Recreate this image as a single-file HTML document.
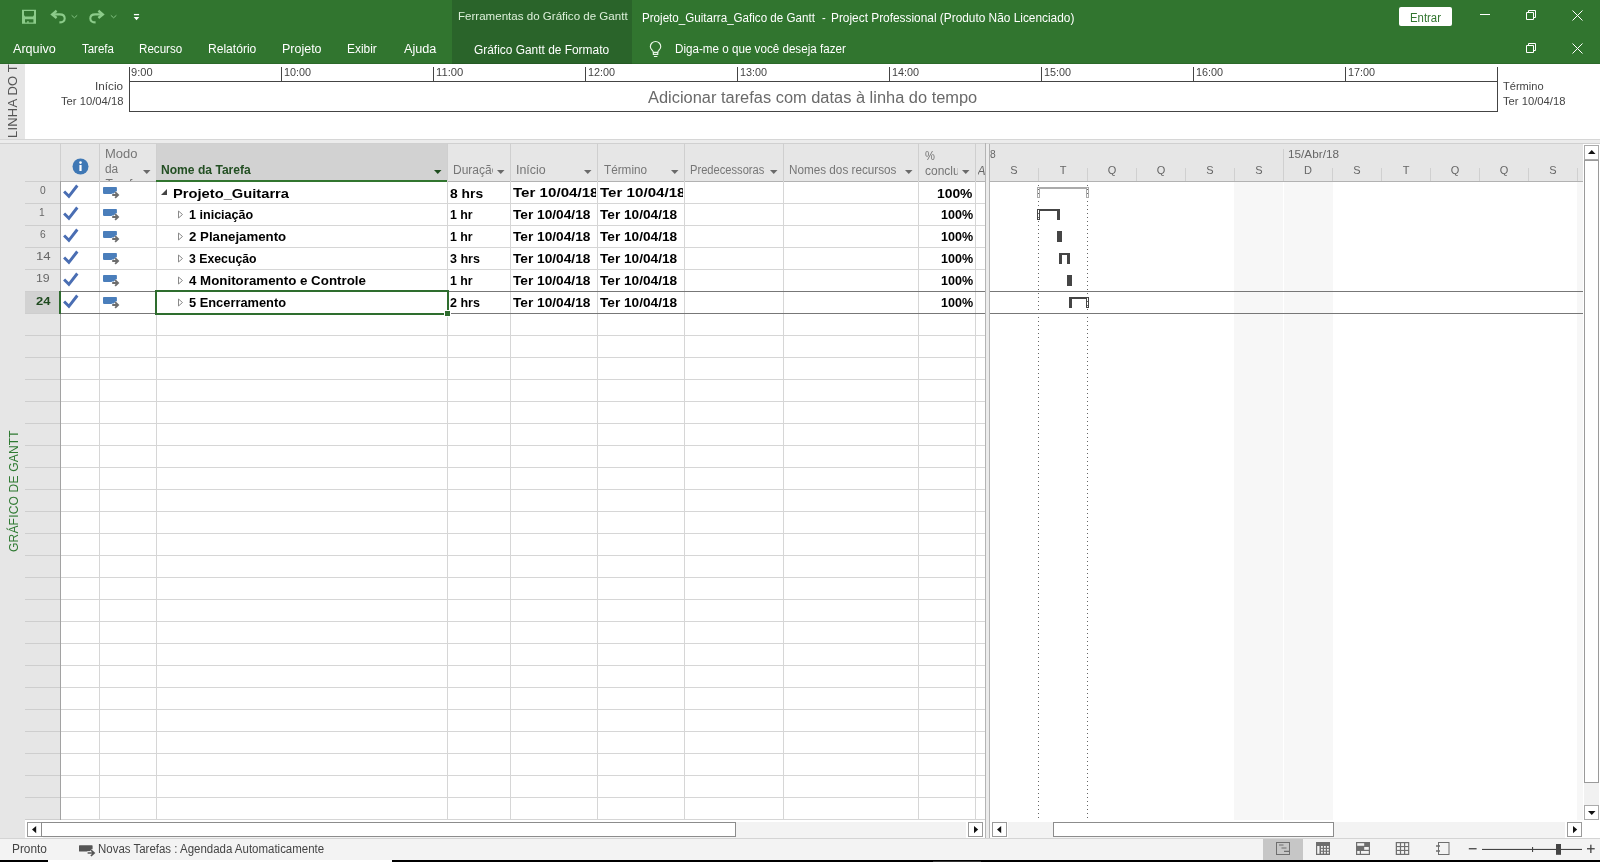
<!DOCTYPE html>
<html lang="pt-BR">
<head>
<meta charset="utf-8">
<title>Projeto_Guitarra_Gafico de Gantt - Project Professional</title>
<style>
*{box-sizing:border-box;margin:0;padding:0}
html,body{width:1600px;height:862px;overflow:hidden;background:#fff}
body{font-family:"Liberation Sans",sans-serif;font-size:12px;color:#444;position:relative}
.abs,.t{position:absolute}
.t{white-space:nowrap;line-height:1;transform-origin:0 50%}
#hdr,#tl,#main,#hs,#st{will-change:transform}
/* header */
#hdr{position:absolute;left:0;top:0;width:1600px;height:64px;background:#31752f}
#ctx{position:absolute;left:452px;top:0;width:180px;height:64px;background:#2a642a}
#hdr .t{color:#fff;font-size:12px}
/* timeline */
#tl{position:absolute;left:0;top:64px;width:1600px;height:75px;background:#fff}
#tlstrip{position:absolute;left:0;top:0;width:25px;height:75px;background:#e6e6e6;overflow:hidden}
#sep{position:absolute;left:0;top:139px;width:1600px;height:4px;background:#ececec;border-top:1px solid #d6d6d6}
.tlh{font-size:12px;color:#444}
/* main */
#main{position:absolute;left:0;top:143px;width:1600px;height:677px;background:#fff}
#strip{position:absolute;left:0;top:0;width:25px;height:695px;background:#e6e6e6}
.hl{left:60px;width:925px;height:1px;background:#d6d6d6}
.vl{top:38px;width:1px;height:639px;background:#d6d6d6}
.ht{color:#767676;font-size:12px}
.gt{color:#666;font-size:11px}
.b0{font-weight:bold;font-size:13.5px;color:#000}
.b1{font-weight:bold;font-size:12px;color:#000}
.dot{width:1px;background:repeating-linear-gradient(to bottom,transparent 0,transparent 3px,#666 3px,#666 4px)}
/* status */
#hs{position:absolute;left:25px;top:820px;width:1575px;height:18px;background:#fff}
#st .t{color:#444}
#st{position:absolute;left:0;top:838px;width:1600px;height:22px;background:#f3f3f3;border-top:1px solid #d4d4d4}
#blk1{position:absolute;left:0;top:860px;width:48px;height:2px;background:#000}
#blk2{position:absolute;left:392px;top:860px;width:1208px;height:2px;background:#000}
#tab1{left:13.0px!important;right:auto!important;top:43.0px!important;font-size:12px!important;transform:scaleX(1.0506)}
#tab2{left:82.0px!important;right:auto!important;top:43.0px!important;font-size:12px!important;transform:scaleX(0.9553)}
#tab3{left:139.0px!important;right:auto!important;top:43.0px!important;font-size:12px!important;transform:scaleX(0.9676)}
#tab4{left:208.0px!important;right:auto!important;top:43.0px!important;font-size:12px!important;transform:scaleX(1.0059)}
#tab5{left:282.0px!important;right:auto!important;top:43.0px!important;font-size:12px!important;transform:scaleX(1.0407)}
#tab6{left:347.0px!important;right:auto!important;top:43.0px!important;font-size:12px!important;transform:scaleX(0.9926)}
#tab7{left:404.0px!important;right:auto!important;top:43.0px!important;font-size:12px!important;transform:scaleX(1.0551)}
#tab8{left:474.0px!important;right:auto!important;top:44.0px!important;font-size:12px!important;transform:scaleX(0.9927)}
#h_ctx{left:458.0px!important;right:auto!important;top:11.0px!important;font-size:11px!important;transform:scaleX(1.0508)}
#h_title{left:642.0px!important;right:auto!important;top:12.0px!important;font-size:12px!important;transform:scaleX(0.967)}
#h_dash{left:822.0px!important;right:auto!important;top:12.0px!important;font-size:12px!important;transform:scaleX(0.93)}
#h_title2{left:831.0px!important;right:auto!important;top:12.0px!important;font-size:12px!important;transform:scaleX(0.9888)}
#h_tell{left:675.0px!important;right:auto!important;top:43.0px!important;font-size:12px!important;transform:scaleX(0.9702)}
#h_entrar{left:1410.0px!important;right:auto!important;top:12.0px!important;font-size:12px!important;transform:scaleX(0.9464)}
#tlh0{left:131.0px!important;right:auto!important;top:3.0px!important;font-size:11px!important;transform:scaleX(1.0064)}
#tlh1{left:284.0px!important;right:auto!important;top:3.0px!important;font-size:11px!important;transform:scaleX(0.9846)}
#tlh2{left:436.0px!important;right:auto!important;top:3.0px!important;font-size:11px!important;transform:scaleX(1.021)}
#tlh3{left:588.0px!important;right:auto!important;top:3.0px!important;font-size:11px!important;transform:scaleX(0.9846)}
#tlh4{left:740.0px!important;right:auto!important;top:3.0px!important;font-size:11px!important;transform:scaleX(0.9846)}
#tlh5{left:892.0px!important;right:auto!important;top:3.0px!important;font-size:11px!important;transform:scaleX(0.9846)}
#tlh6{left:1044.0px!important;right:auto!important;top:3.0px!important;font-size:11px!important;transform:scaleX(0.9846)}
#tlh7{left:1196.0px!important;right:auto!important;top:3.0px!important;font-size:11px!important;transform:scaleX(0.9846)}
#tlh8{left:1348.0px!important;right:auto!important;top:3.0px!important;font-size:11px!important;transform:scaleX(0.9846)}
#tl_i1{left:95.0px!important;right:auto!important;top:17.0px!important;font-size:11px!important;transform:scaleX(1.0655)}
#tl_i2{left:61.0px!important;right:auto!important;top:32.0px!important;font-size:11px!important;transform:scaleX(1.0207)}
#tl_t1{left:1503.0px!important;right:auto!important;top:17.0px!important;font-size:11px!important;transform:scaleX(1.0071)}
#tl_t2{left:1503.0px!important;right:auto!important;top:32.0px!important;font-size:11px!important;transform:scaleX(1.0207)}
#tl_c{left:648.0px!important;right:auto!important;top:25.0px!important;font-size:17.3px!important;transform:scaleX(0.9494)}
#hm1{left:105.0px!important;right:auto!important;top:5.0px!important;font-size:12px!important;transform:scaleX(1.0817)}
#hm2{left:105.0px!important;right:auto!important;top:20.0px!important;font-size:12px!important;transform:scaleX(0.9904)}
#hn{left:161.0px!important;right:auto!important;top:21.0px!important;font-size:12px!important;transform:scaleX(1.0073)}
#hi{left:516.0px!important;right:auto!important;top:21.0px!important;font-size:12px!important;transform:scaleX(1.0366)}
#hte{left:604.0px!important;right:auto!important;top:21.0px!important;font-size:12px!important;transform:scaleX(0.9785)}
#hp{left:690.0px!important;right:auto!important;top:21.0px!important;font-size:12px!important;transform:scaleX(0.9289)}
#hr{left:789.0px!important;right:auto!important;top:21.0px!important;font-size:12px!important;transform:scaleX(0.9762)}
#hpc{left:925.0px!important;right:auto!important;top:7.0px!important;font-size:12px!important;transform:scaleX(0.93)}
#id0{left:40.0px!important;right:auto!important;top:42.0px!important;font-size:11px!important;transform:scaleX(0.93)}
#id1{left:39.0px!important;right:auto!important;top:64.0px!important;font-size:11px!important;transform:scaleX(0.93)}
#id2{left:40.0px!important;right:auto!important;top:86.0px!important;font-size:11px!important;transform:scaleX(0.93)}
#id3{left:36.0px!important;right:auto!important;top:108.0px!important;font-size:11px!important;transform:scaleX(1.2027)}
#id4{left:36.0px!important;right:auto!important;top:130.0px!important;font-size:11px!important;transform:scaleX(1.1222)}
#id5{left:36.0px!important;right:auto!important;top:153.0px!important;font-size:11.5px!important;transform:scaleX(1.1271)}
#n0{left:173.0px!important;right:auto!important;top:44.0px!important;font-size:13.5px!important;transform:scaleX(1.0891)}
#d0{left:450.0px!important;right:auto!important;top:44.0px!important;font-size:13.5px!important;transform:scaleX(1.025)}
#p0{left:937.0px!important;right:auto!important;top:44.0px!important;font-size:13.5px!important;transform:scaleX(1.0264)}
#n1{left:189.0px!important;right:auto!important;top:66.0px!important;font-size:12px!important;transform:scaleX(1.0471)}
#d1{left:450.0px!important;right:auto!important;top:66.0px!important;font-size:12px!important;transform:scaleX(1.0293)}
#s1{left:513.0px!important;right:auto!important;top:66.0px!important;font-size:12px!important;transform:scaleX(1.1407)}
#f1{left:600.0px!important;right:auto!important;top:66.0px!important;font-size:12px!important;transform:scaleX(1.1365)}
#p1{left:941.0px!important;right:auto!important;top:66.0px!important;font-size:12px!important;transform:scaleX(1.0427)}
#n2{left:189.0px!important;right:auto!important;top:88.0px!important;font-size:12px!important;transform:scaleX(1.1037)}
#d2{left:450.0px!important;right:auto!important;top:88.0px!important;font-size:12px!important;transform:scaleX(1.0293)}
#s2{left:513.0px!important;right:auto!important;top:88.0px!important;font-size:12px!important;transform:scaleX(1.1407)}
#f2{left:600.0px!important;right:auto!important;top:88.0px!important;font-size:12px!important;transform:scaleX(1.1365)}
#p2{left:941.0px!important;right:auto!important;top:88.0px!important;font-size:12px!important;transform:scaleX(1.0427)}
#n3{left:189.0px!important;right:auto!important;top:110.0px!important;font-size:12px!important;transform:scaleX(1.0228)}
#d3{left:450.0px!important;right:auto!important;top:110.0px!important;font-size:12px!important;transform:scaleX(1.0416)}
#s3{left:513.0px!important;right:auto!important;top:110.0px!important;font-size:12px!important;transform:scaleX(1.1407)}
#f3{left:600.0px!important;right:auto!important;top:110.0px!important;font-size:12px!important;transform:scaleX(1.1365)}
#p3{left:941.0px!important;right:auto!important;top:110.0px!important;font-size:12px!important;transform:scaleX(1.0427)}
#n4{left:189.0px!important;right:auto!important;top:132.0px!important;font-size:12px!important;transform:scaleX(1.1101)}
#d4{left:450.0px!important;right:auto!important;top:132.0px!important;font-size:12px!important;transform:scaleX(1.0293)}
#s4{left:513.0px!important;right:auto!important;top:132.0px!important;font-size:12px!important;transform:scaleX(1.1407)}
#f4{left:600.0px!important;right:auto!important;top:132.0px!important;font-size:12px!important;transform:scaleX(1.1365)}
#p4{left:941.0px!important;right:auto!important;top:132.0px!important;font-size:12px!important;transform:scaleX(1.0427)}
#n5{left:189.0px!important;right:auto!important;top:154.0px!important;font-size:12px!important;transform:scaleX(1.0703)}
#d5{left:450.0px!important;right:auto!important;top:154.0px!important;font-size:12px!important;transform:scaleX(1.0417)}
#s5{left:513.0px!important;right:auto!important;top:154.0px!important;font-size:12px!important;transform:scaleX(1.1407)}
#f5{left:600.0px!important;right:auto!important;top:154.0px!important;font-size:12px!important;transform:scaleX(1.1365)}
#p5{left:941.0px!important;right:auto!important;top:154.0px!important;font-size:12px!important;transform:scaleX(1.0427)}
#gw1{left:990.0px!important;right:auto!important;top:6.0px!important;font-size:11px!important;transform:scaleX(0.93)}
#gw2{left:1288.0px!important;right:auto!important;top:6.0px!important;font-size:11px!important;transform:scaleX(1.0686)}
#st1{left:12.0px!important;right:auto!important;top:4.0px!important;font-size:12px!important;transform:scaleX(0.9879)}
#st2{left:98.0px!important;right:auto!important;top:4.0px!important;font-size:12px!important;transform:scaleX(0.9557)}
</style>
</head>
<body><div id="hdr">
  <div id="ctx"></div>
  <div class="abs" style="left:0;top:63px;width:1600px;height:1px;background:rgba(0,0,0,0.10)"></div>
  <!-- quick access toolbar -->
  <svg class="abs" style="left:20px;top:8px" width="124" height="18" viewBox="0 0 124 18" fill="none" stroke="#8ccb8a">
    <path fill="#8ccb8a" stroke="none" fill-rule="evenodd" d="M2 1.800h14v13.900H2zM4 3.100v4l1 1.300h8l1-1.300v-4zM5 11.200v3.400h2.300v-1.600h1.300v1.600h4.800v-3.400z"/>
    <path d="M36.600 2.800L32.200 6.400l4.400 3.600" stroke-width="2.400"/>
    <path d="M33 6.400h6.800c3 0 4.900 1.700 4.900 4.100s-2 3.900-5.300 3.900" stroke-width="2.100"/>
    <path d="M51.600 7.300l2.800 2.500 2.800-2.500" stroke-width="1" stroke="#83c282"/>
    <path d="M78.400 2.800l4.400 3.600-4.400 3.600" stroke-width="2.400"/>
    <path d="M82 6.400h-6.800c-3 0-4.900 1.700-4.900 4.100s2 3.900 5.300 3.900" stroke-width="2.100"/>
    <path d="M90.800 7.300l2.800 2.500 2.800-2.500" stroke-width="1" stroke="#83c282"/>
    <path d="M113.900 6.600h5.200" stroke="#fff" stroke-width="1.300"/>
    <path d="M113.700 8.900h5.600l-2.800 3.300z" fill="#fff" stroke="none"/>
  </svg>
  <span class="t" id="h_ctx" style="left:459px;top:10px;color:#dcefd9">Ferramentas do Gráfico de Gantt</span>
  <span class="t" id="h_title" style="left:643px;top:11px">Projeto_Guitarra_Gafico de Gantt</span>
  <span class="t" id="h_dash" style="left:822px;top:11px">-</span>
  <span class="t" id="h_title2" style="left:832px;top:11px">Project Professional (Produto Não Licenciado)</span>
  <div class="abs" style="left:1399px;top:7px;width:53px;height:19px;background:#fff;border-radius:2px"></div>
  <span class="t" id="h_entrar" style="left:1410px;top:11px;color:#31752f">Entrar</span>
  <!-- window buttons -->
  <svg class="abs" style="left:1474px;top:6px" width="116" height="52" viewBox="0 0 116 52" fill="none" stroke="#fff" stroke-width="1">
    <path d="M6 8.5h10"/>
    <path d="M52.5 6.5h7v7h-7z"/><path d="M54.5 6.5v-2h7v7h-2"/>
    <path d="M98.5 4.5l10 10M108.5 4.5l-10 10"/>
    <path d="M52.5 39.5h7v7h-7z"/><path d="M54.5 39.5v-2h7v7h-2"/>
    <path d="M98.5 37.5l10 10M108.5 37.5l-10 10"/>
  </svg>
  <!-- tabs -->
  <span class="t" id="tab1" style="left:13px;top:43px">Arquivo</span>
  <span class="t" id="tab2" style="left:82px;top:43px">Tarefa</span>
  <span class="t" id="tab3" style="left:140px;top:43px">Recurso</span>
  <span class="t" id="tab4" style="left:209px;top:43px">Relatório</span>
  <span class="t" id="tab5" style="left:283px;top:43px">Projeto</span>
  <span class="t" id="tab6" style="left:347px;top:43px">Exibir</span>
  <span class="t" id="tab7" style="left:403px;top:43px">Ajuda</span>
  <span class="t" id="tab8" style="left:475px;top:43px">Gráfico Gantt de Formato</span>
  <svg class="abs" style="left:648px;top:40px" width="16" height="18" viewBox="0 0 16 18" fill="none" stroke="#e8f6e6" stroke-width="1.150">
    <path d="M5.350 12.400C5.350 10.600 2.350 9.400 2.350 6.650A5.200 5.200 0 0 1 12.750 6.650C12.750 9.400 9.750 10.600 9.750 12.400z"/>
    <path d="M5.350 12.400v2h4.400v-2M5.900 16.450h3.500"/>
  </svg>
  <span class="t" id="h_tell" style="left:675px;top:43px">Diga-me o que você deseja fazer</span>
</div>
<div id="tl">
  <div id="tlstrip"><span class="t" id="tlv" style="left:6px;top:74px;font-size:13px;color:#555;transform:rotate(-90deg);transform-origin:0 0;letter-spacing:0.2px">LINHA DO TEMPO</span></div>
  <div class="abs" style="left:129px;top:17px;width:1369px;height:31px;border:1px solid #444"></div>
  <div class="abs" style="left:129px;top:3px;width:1px;height:15px;background:#444"></div>
<span class="t tlh" id="tlh0" style="left:133px;top:2px">9:00</span>
<div class="abs" style="left:281px;top:3px;width:1px;height:15px;background:#444"></div>
<span class="t tlh" id="tlh1" style="left:285px;top:2px">10:00</span>
<div class="abs" style="left:433px;top:3px;width:1px;height:15px;background:#444"></div>
<span class="t tlh" id="tlh2" style="left:437px;top:2px">11:00</span>
<div class="abs" style="left:585px;top:3px;width:1px;height:15px;background:#444"></div>
<span class="t tlh" id="tlh3" style="left:589px;top:2px">12:00</span>
<div class="abs" style="left:737px;top:3px;width:1px;height:15px;background:#444"></div>
<span class="t tlh" id="tlh4" style="left:741px;top:2px">13:00</span>
<div class="abs" style="left:889px;top:3px;width:1px;height:15px;background:#444"></div>
<span class="t tlh" id="tlh5" style="left:893px;top:2px">14:00</span>
<div class="abs" style="left:1041px;top:3px;width:1px;height:15px;background:#444"></div>
<span class="t tlh" id="tlh6" style="left:1045px;top:2px">15:00</span>
<div class="abs" style="left:1193px;top:3px;width:1px;height:15px;background:#444"></div>
<span class="t tlh" id="tlh7" style="left:1197px;top:2px">16:00</span>
<div class="abs" style="left:1345px;top:3px;width:1px;height:15px;background:#444"></div>
<span class="t tlh" id="tlh8" style="left:1349px;top:2px">17:00</span>
<div class="abs" style="left:1497px;top:3px;width:1px;height:15px;background:#444"></div>

  <span class="t" id="tl_i1" style="left:94px;top:16px;font-size:11px">Início</span>
  <span class="t" id="tl_i2" style="left:56px;top:31px;font-size:11px">Ter 10/04/18</span>
  <span class="t" id="tl_t1" style="left:1503px;top:16px;font-size:12px">Término</span>
  <span class="t" id="tl_t2" style="left:1503px;top:31px;font-size:12px">Ter 10/04/18</span>
  <span class="t" id="tl_c" style="left:649px;top:24px;font-size:17px;color:#6a6a6a">Adicionar tarefas com datas à linha do tempo</span>
</div>
<div id="sep"></div>
<div id="main">
<div id="strip"><span class="t" id="gv" style="left:7px;top:409px;font-size:13px;color:#2f7a32;transform:rotate(-90deg) scaleX(0.925);transform-origin:0 0;letter-spacing:0.2px">GRÁFICO DE GANTT</span></div>
<div class="abs" style="left:25px;top:0;width:35px;height:677px;background:#e6e6e6"></div>
<div class="abs" style="left:25px;top:149px;width:35px;height:21px;background:#d2d2d2"></div>
<div class="abs" style="left:60px;top:0;width:925px;height:38px;background:#e6e6e6"></div>
<div class="abs" style="left:156px;top:0;width:291px;height:38px;background:#d2d2d2"></div>
<div class="abs hl" style="top:60px"></div>
<div class="abs hl" style="top:82px"></div>
<div class="abs hl" style="top:104px"></div>
<div class="abs hl" style="top:126px"></div>
<div class="abs hl" style="top:148px"></div>
<div class="abs hl" style="top:170px"></div>
<div class="abs hl" style="top:192px"></div>
<div class="abs hl" style="top:214px"></div>
<div class="abs hl" style="top:236px"></div>
<div class="abs hl" style="top:258px"></div>
<div class="abs hl" style="top:280px"></div>
<div class="abs hl" style="top:302px"></div>
<div class="abs hl" style="top:324px"></div>
<div class="abs hl" style="top:346px"></div>
<div class="abs hl" style="top:368px"></div>
<div class="abs hl" style="top:390px"></div>
<div class="abs hl" style="top:412px"></div>
<div class="abs hl" style="top:434px"></div>
<div class="abs hl" style="top:456px"></div>
<div class="abs hl" style="top:478px"></div>
<div class="abs hl" style="top:500px"></div>
<div class="abs hl" style="top:522px"></div>
<div class="abs hl" style="top:544px"></div>
<div class="abs hl" style="top:566px"></div>
<div class="abs hl" style="top:588px"></div>
<div class="abs hl" style="top:610px"></div>
<div class="abs hl" style="top:632px"></div>
<div class="abs hl" style="top:654px"></div>
<div class="abs hl" style="top:676px"></div>
<div class="abs" style="left:0;top:0;width:985px;height:1px;background:#d0d0d0"></div>
<div class="abs" style="left:25px;top:38px;width:35px;height:1px;background:#cecece"></div>
<div class="abs" style="left:25px;top:60px;width:35px;height:1px;background:#cecece"></div>
<div class="abs" style="left:25px;top:82px;width:35px;height:1px;background:#cecece"></div>
<div class="abs" style="left:25px;top:104px;width:35px;height:1px;background:#cecece"></div>
<div class="abs" style="left:25px;top:126px;width:35px;height:1px;background:#cecece"></div>
<div class="abs" style="left:25px;top:148px;width:35px;height:1px;background:#cecece"></div>
<div class="abs" style="left:25px;top:170px;width:35px;height:1px;background:#cecece"></div>
<div class="abs" style="left:25px;top:192px;width:35px;height:1px;background:#cecece"></div>
<div class="abs" style="left:25px;top:214px;width:35px;height:1px;background:#cecece"></div>
<div class="abs" style="left:25px;top:236px;width:35px;height:1px;background:#cecece"></div>
<div class="abs" style="left:25px;top:258px;width:35px;height:1px;background:#cecece"></div>
<div class="abs" style="left:25px;top:280px;width:35px;height:1px;background:#cecece"></div>
<div class="abs" style="left:25px;top:302px;width:35px;height:1px;background:#cecece"></div>
<div class="abs" style="left:25px;top:324px;width:35px;height:1px;background:#cecece"></div>
<div class="abs" style="left:25px;top:346px;width:35px;height:1px;background:#cecece"></div>
<div class="abs" style="left:25px;top:368px;width:35px;height:1px;background:#cecece"></div>
<div class="abs" style="left:25px;top:390px;width:35px;height:1px;background:#cecece"></div>
<div class="abs" style="left:25px;top:412px;width:35px;height:1px;background:#cecece"></div>
<div class="abs" style="left:25px;top:434px;width:35px;height:1px;background:#cecece"></div>
<div class="abs" style="left:25px;top:456px;width:35px;height:1px;background:#cecece"></div>
<div class="abs" style="left:25px;top:478px;width:35px;height:1px;background:#cecece"></div>
<div class="abs" style="left:25px;top:500px;width:35px;height:1px;background:#cecece"></div>
<div class="abs" style="left:25px;top:522px;width:35px;height:1px;background:#cecece"></div>
<div class="abs" style="left:25px;top:544px;width:35px;height:1px;background:#cecece"></div>
<div class="abs" style="left:25px;top:566px;width:35px;height:1px;background:#cecece"></div>
<div class="abs" style="left:25px;top:588px;width:35px;height:1px;background:#cecece"></div>
<div class="abs" style="left:25px;top:610px;width:35px;height:1px;background:#cecece"></div>
<div class="abs" style="left:25px;top:632px;width:35px;height:1px;background:#cecece"></div>
<div class="abs" style="left:25px;top:654px;width:35px;height:1px;background:#cecece"></div>
<div class="abs" style="left:25px;top:676px;width:35px;height:1px;background:#cecece"></div>
<div class="abs" style="left:60px;top:38px;width:925px;height:1px;background:#b2b2b2"></div>
<div class="abs" style="left:99px;top:0;width:1px;height:38px;background:#cfcfcf"></div>
<div class="abs vl" style="left:99px"></div>
<div class="abs" style="left:156px;top:0;width:1px;height:38px;background:#cfcfcf"></div>
<div class="abs vl" style="left:156px"></div>
<div class="abs" style="left:447px;top:0;width:1px;height:38px;background:#cfcfcf"></div>
<div class="abs vl" style="left:447px"></div>
<div class="abs" style="left:510px;top:0;width:1px;height:38px;background:#cfcfcf"></div>
<div class="abs vl" style="left:510px"></div>
<div class="abs" style="left:597px;top:0;width:1px;height:38px;background:#cfcfcf"></div>
<div class="abs vl" style="left:597px"></div>
<div class="abs" style="left:684px;top:0;width:1px;height:38px;background:#cfcfcf"></div>
<div class="abs vl" style="left:684px"></div>
<div class="abs" style="left:783px;top:0;width:1px;height:38px;background:#cfcfcf"></div>
<div class="abs vl" style="left:783px"></div>
<div class="abs" style="left:918px;top:0;width:1px;height:38px;background:#cfcfcf"></div>
<div class="abs vl" style="left:918px"></div>
<div class="abs" style="left:975px;top:0;width:1px;height:38px;background:#cfcfcf"></div>
<div class="abs vl" style="left:975px"></div>
<div class="abs" style="left:60px;top:0;width:1px;height:38px;background:#cfcfcf"></div>
<div class="abs" style="left:60px;top:38px;width:1px;height:639px;background:#a2a2a2"></div>
<div class="abs" style="left:985px;top:0;width:1px;height:695px;background:#b4b4b4"></div>
<div class="abs" style="left:986px;top:0;width:3px;height:695px;background:#ececec"></div>
<div class="abs" style="left:989px;top:0;width:1px;height:695px;background:#b4b4b4"></div>
<div class="abs" style="left:156px;top:37px;width:291px;height:2px;background:#31752f"></div>
<div class="abs" style="left:60px;top:148px;width:925px;height:1px;background:#777"></div>
<div class="abs" style="left:60px;top:170px;width:925px;height:1px;background:#777"></div>
<div class="abs" style="left:59px;top:148px;width:2px;height:23px;background:#2e6b2e"></div>
<div class="abs" style="left:155px;top:147px;width:294px;height:25px;border:2px solid #2e6d2e"></div>
<div class="abs" style="left:444px;top:167px;width:7px;height:7px;background:#2e6d2e;border:1px solid #fff"></div>
<svg class="abs" style="left:71.700px;top:14.599999999999994px" width="17" height="17" viewBox="0 0 17 17"><circle cx="8.500" cy="8.500" r="8" fill="#3f78b5"/><circle cx="8.500" cy="4.600" r="1.300" fill="#fff"/><rect x="7.400" y="7" width="2.200" height="6" fill="#fff"/></svg>
<span class="t ht" id="hm1" style="left:105px;top:5px">Modo</span>
<span class="t ht" id="hm2" style="left:105px;top:20px">da</span>
<div class="abs" style="left:105px;top:35px;width:40px;height:3px;overflow:hidden"><span class="t ht" id="hm3" style="left:0.600px;top:-0.500px">Tarefa</span></div>
<svg class="abs" style="left:143px;top:27px" width="8" height="5" viewBox="0 0 8 5"><path d="M0 0h7.500L3.750 4z" fill="#6a6a6a"/></svg>
<span class="t" id="hn" style="left:162px;top:21px;font-weight:bold;color:#234f23">Nome da Tarefa</span>
<svg class="abs" style="left:433.75px;top:27px" width="8" height="5" viewBox="0 0 8 5"><path d="M0 0h7.500L3.750 4z" fill="#1f4d1f"/></svg>
<div class="abs" style="left:453px;top:17px;width:40px;height:20px;overflow:hidden"><span class="t ht" id="hd" style="left:0;top:4px">Duração</span></div>
<svg class="abs" style="left:497px;top:27px" width="8" height="5" viewBox="0 0 8 5"><path d="M0 0h7.500L3.750 4z" fill="#6a6a6a"/></svg>
<span class="t ht" id="hi" style="left:516px;top:21px">Início</span>
<svg class="abs" style="left:584.2px;top:27px" width="8" height="5" viewBox="0 0 8 5"><path d="M0 0h7.500L3.750 4z" fill="#6a6a6a"/></svg>
<span class="t ht" id="hte" style="left:604px;top:21px">Término</span>
<svg class="abs" style="left:671px;top:27px" width="8" height="5" viewBox="0 0 8 5"><path d="M0 0h7.500L3.750 4z" fill="#6a6a6a"/></svg>
<span class="t ht" id="hp" style="left:690px;top:21px">Predecessoras</span>
<svg class="abs" style="left:770px;top:27px" width="8" height="5" viewBox="0 0 8 5"><path d="M0 0h7.500L3.750 4z" fill="#6a6a6a"/></svg>
<span class="t ht" id="hr" style="left:790px;top:21px">Nomes dos recursos</span>
<svg class="abs" style="left:905px;top:27px" width="8" height="5" viewBox="0 0 8 5"><path d="M0 0h7.500L3.750 4z" fill="#6a6a6a"/></svg>
<span class="t ht" id="hpc" style="left:925px;top:8px">%</span>
<div class="abs" style="left:925px;top:17px;width:33px;height:20px;overflow:hidden"><span class="t ht" id="hc" style="left:0;top:5px">concluída</span></div>
<svg class="abs" style="left:961.6px;top:27px" width="8" height="5" viewBox="0 0 8 5"><path d="M0 0h7.500L3.750 4z" fill="#6a6a6a"/></svg>
<div class="abs" style="left:978px;top:17px;width:7px;height:20px;overflow:hidden"><span class="t ht" id="ha" style="left:-0.500px;top:4.500px;font-style:italic;color:#666">Adicionar Nova Coluna</span></div>
<span class="t" id="id0" style="left:40px;top:42px;color:#666">0</span>
<svg class="abs" style="left:62px;top:40px" width="18" height="16" viewBox="0 0 18 16"><path d="M2.100 8.500L6.900 13.300L15.300 2.500" fill="none" stroke="#4a6eb3" stroke-width="2.900"/></svg>
<svg class="abs" style="left:103px;top:44px" width="18" height="13" viewBox="0 0 18 13"><rect x="0" y="0" width="13.900" height="6.900" rx="0.800" fill="#4a7ebb"/><path d="M8.800 8h5.800M12.100 5.100l3 2.900-3 2.900" fill="none" stroke="#fff" stroke-width="3.200"/><path d="M9.200 8h5.600M12.100 5.100l3 2.900-3 2.900" fill="none" stroke="#6d6d6d" stroke-width="1.800"/></svg>
<svg class="abs" style="left:160px;top:45px" width="8" height="8" viewBox="0 0 8 8"><path d="M7 1v6H1z" fill="#444"/></svg>
<span class="t b0" id="n0" style="left:173px;top:43px">Projeto_Guitarra</span>
<span class="t b0" id="d0" style="left:450px;top:43px">8 hrs</span>
<div class="abs" style="left:513px;top:39px;width:82.500px;height:20px;overflow:hidden"><span class="t b0" id="s0" style="left:0;top:4.300px;transform:scaleX(1.120)">Ter 10/04/18</span></div>
<div class="abs" style="left:600px;top:39px;width:82.500px;height:20px;overflow:hidden"><span class="t b0" id="f0" style="left:0;top:4.300px;transform:scaleX(1.120)">Ter 10/04/18</span></div>
<span class="t b0" id="p0" style="left:938px;top:43px">100%</span>
<span class="t" id="id1" style="left:40px;top:64px;color:#666">1</span>
<svg class="abs" style="left:62px;top:62px" width="18" height="16" viewBox="0 0 18 16"><path d="M2.100 8.500L6.900 13.300L15.300 2.500" fill="none" stroke="#4a6eb3" stroke-width="2.900"/></svg>
<svg class="abs" style="left:103px;top:66px" width="18" height="13" viewBox="0 0 18 13"><rect x="0" y="0" width="13.900" height="6.900" rx="0.800" fill="#4a7ebb"/><path d="M8.800 8h5.800M12.100 5.100l3 2.900-3 2.900" fill="none" stroke="#fff" stroke-width="3.200"/><path d="M9.200 8h5.600M12.100 5.100l3 2.900-3 2.900" fill="none" stroke="#6d6d6d" stroke-width="1.800"/></svg>
<svg class="abs" style="left:177px;top:67px" width="7" height="9" viewBox="0 0 7 9"><path d="M1.500 1l4 3.500-4 3.500z" fill="#fff" stroke="#8a8a8a" stroke-width="1"/></svg>
<span class="t b1" id="n1" style="left:189px;top:66px">1 iniciação</span>
<span class="t b1" id="d1" style="left:450px;top:66px">1 hr</span>
<span class="t b1" id="s1" style="left:513px;top:66px">Ter 10/04/18</span>
<span class="t b1" id="f1" style="left:600px;top:66px">Ter 10/04/18</span>
<span class="t b1" id="p1" style="left:941px;top:66px">100%</span>
<span class="t" id="id2" style="left:40px;top:86px;color:#666">6</span>
<svg class="abs" style="left:62px;top:84px" width="18" height="16" viewBox="0 0 18 16"><path d="M2.100 8.500L6.900 13.300L15.300 2.500" fill="none" stroke="#4a6eb3" stroke-width="2.900"/></svg>
<svg class="abs" style="left:103px;top:88px" width="18" height="13" viewBox="0 0 18 13"><rect x="0" y="0" width="13.900" height="6.900" rx="0.800" fill="#4a7ebb"/><path d="M8.800 8h5.800M12.100 5.100l3 2.900-3 2.900" fill="none" stroke="#fff" stroke-width="3.200"/><path d="M9.200 8h5.600M12.100 5.100l3 2.900-3 2.900" fill="none" stroke="#6d6d6d" stroke-width="1.800"/></svg>
<svg class="abs" style="left:177px;top:89px" width="7" height="9" viewBox="0 0 7 9"><path d="M1.500 1l4 3.500-4 3.500z" fill="#fff" stroke="#8a8a8a" stroke-width="1"/></svg>
<span class="t b1" id="n2" style="left:189px;top:88px">2 Planejamento</span>
<span class="t b1" id="d2" style="left:450px;top:88px">1 hr</span>
<span class="t b1" id="s2" style="left:513px;top:88px">Ter 10/04/18</span>
<span class="t b1" id="f2" style="left:600px;top:88px">Ter 10/04/18</span>
<span class="t b1" id="p2" style="left:941px;top:88px">100%</span>
<span class="t" id="id3" style="left:40px;top:108px;color:#666">14</span>
<svg class="abs" style="left:62px;top:106px" width="18" height="16" viewBox="0 0 18 16"><path d="M2.100 8.500L6.900 13.300L15.300 2.500" fill="none" stroke="#4a6eb3" stroke-width="2.900"/></svg>
<svg class="abs" style="left:103px;top:110px" width="18" height="13" viewBox="0 0 18 13"><rect x="0" y="0" width="13.900" height="6.900" rx="0.800" fill="#4a7ebb"/><path d="M8.800 8h5.800M12.100 5.100l3 2.900-3 2.900" fill="none" stroke="#fff" stroke-width="3.200"/><path d="M9.200 8h5.600M12.100 5.100l3 2.900-3 2.900" fill="none" stroke="#6d6d6d" stroke-width="1.800"/></svg>
<svg class="abs" style="left:177px;top:111px" width="7" height="9" viewBox="0 0 7 9"><path d="M1.500 1l4 3.500-4 3.500z" fill="#fff" stroke="#8a8a8a" stroke-width="1"/></svg>
<span class="t b1" id="n3" style="left:189px;top:110px">3 Execução</span>
<span class="t b1" id="d3" style="left:450px;top:110px">3 hrs</span>
<span class="t b1" id="s3" style="left:513px;top:110px">Ter 10/04/18</span>
<span class="t b1" id="f3" style="left:600px;top:110px">Ter 10/04/18</span>
<span class="t b1" id="p3" style="left:941px;top:110px">100%</span>
<span class="t" id="id4" style="left:40px;top:130px;color:#666">19</span>
<svg class="abs" style="left:62px;top:128px" width="18" height="16" viewBox="0 0 18 16"><path d="M2.100 8.500L6.900 13.300L15.300 2.500" fill="none" stroke="#4a6eb3" stroke-width="2.900"/></svg>
<svg class="abs" style="left:103px;top:132px" width="18" height="13" viewBox="0 0 18 13"><rect x="0" y="0" width="13.900" height="6.900" rx="0.800" fill="#4a7ebb"/><path d="M8.800 8h5.800M12.100 5.100l3 2.900-3 2.900" fill="none" stroke="#fff" stroke-width="3.200"/><path d="M9.200 8h5.600M12.100 5.100l3 2.900-3 2.900" fill="none" stroke="#6d6d6d" stroke-width="1.800"/></svg>
<svg class="abs" style="left:177px;top:133px" width="7" height="9" viewBox="0 0 7 9"><path d="M1.500 1l4 3.500-4 3.500z" fill="#fff" stroke="#8a8a8a" stroke-width="1"/></svg>
<span class="t b1" id="n4" style="left:189px;top:132px">4 Monitoramento e Controle</span>
<span class="t b1" id="d4" style="left:450px;top:132px">1 hr</span>
<span class="t b1" id="s4" style="left:513px;top:132px">Ter 10/04/18</span>
<span class="t b1" id="f4" style="left:600px;top:132px">Ter 10/04/18</span>
<span class="t b1" id="p4" style="left:941px;top:132px">100%</span>
<span class="t" id="id5" style="left:36px;top:153px;font-weight:bold;color:#1f4a1f">24</span>
<svg class="abs" style="left:62px;top:150px" width="18" height="16" viewBox="0 0 18 16"><path d="M2.100 8.500L6.900 13.300L15.300 2.500" fill="none" stroke="#4a6eb3" stroke-width="2.900"/></svg>
<svg class="abs" style="left:103px;top:154px" width="18" height="13" viewBox="0 0 18 13"><rect x="0" y="0" width="13.900" height="6.900" rx="0.800" fill="#4a7ebb"/><path d="M8.800 8h5.800M12.100 5.100l3 2.900-3 2.900" fill="none" stroke="#fff" stroke-width="3.200"/><path d="M9.200 8h5.600M12.100 5.100l3 2.900-3 2.900" fill="none" stroke="#6d6d6d" stroke-width="1.800"/></svg>
<svg class="abs" style="left:177px;top:155px" width="7" height="9" viewBox="0 0 7 9"><path d="M1.500 1l4 3.500-4 3.500z" fill="#fff" stroke="#8a8a8a" stroke-width="1"/></svg>
<span class="t b1" id="n5" style="left:189px;top:154px">5 Encerramento</span>
<span class="t b1" id="d5" style="left:450px;top:154px">2 hrs</span>
<span class="t b1" id="s5" style="left:513px;top:154px">Ter 10/04/18</span>
<span class="t b1" id="f5" style="left:600px;top:154px">Ter 10/04/18</span>
<span class="t b1" id="p5" style="left:941px;top:154px">100%</span>
<div class="abs" style="left:990px;top:0;width:593px;height:38px;background:#e6e6e6"></div>
<div class="abs" style="left:986px;top:0;width:614px;height:1px;background:#d0d0d0"></div>
<div class="abs" style="left:990px;top:38px;width:593px;height:1px;background:#b2b2b2"></div>
<div class="abs" style="left:1234px;top:39px;width:49px;height:638px;background:#f7f7f7"></div>
<div class="abs" style="left:1284px;top:39px;width:49px;height:638px;background:#f7f7f7"></div>
<div class="abs" style="left:1577px;top:39px;width:6px;height:638px;background:#f7f7f7"></div>
<div class="abs" style="left:1038px;top:25px;width:1px;height:13px;background:#d0d0d0"></div>
<span class="t gt" id="g0" style="left:1004.0px;width:20px;text-align:center;top:22px">S</span>
<div class="abs" style="left:1087px;top:25px;width:1px;height:13px;background:#d0d0d0"></div>
<span class="t gt" id="g1" style="left:1053.0px;width:20px;text-align:center;top:22px">T</span>
<div class="abs" style="left:1136px;top:25px;width:1px;height:13px;background:#d0d0d0"></div>
<span class="t gt" id="g2" style="left:1102.0px;width:20px;text-align:center;top:22px">Q</span>
<div class="abs" style="left:1185px;top:25px;width:1px;height:13px;background:#d0d0d0"></div>
<span class="t gt" id="g3" style="left:1151.0px;width:20px;text-align:center;top:22px">Q</span>
<div class="abs" style="left:1234px;top:25px;width:1px;height:13px;background:#d0d0d0"></div>
<span class="t gt" id="g4" style="left:1200.0px;width:20px;text-align:center;top:22px">S</span>
<div class="abs" style="left:1283px;top:6px;width:1px;height:32px;background:#d0d0d0"></div>
<span class="t gt" id="g5" style="left:1249.0px;width:20px;text-align:center;top:22px">S</span>
<div class="abs" style="left:1332px;top:25px;width:1px;height:13px;background:#d0d0d0"></div>
<span class="t gt" id="g6" style="left:1298.0px;width:20px;text-align:center;top:22px">D</span>
<div class="abs" style="left:1381px;top:25px;width:1px;height:13px;background:#d0d0d0"></div>
<span class="t gt" id="g7" style="left:1347.0px;width:20px;text-align:center;top:22px">S</span>
<div class="abs" style="left:1430px;top:25px;width:1px;height:13px;background:#d0d0d0"></div>
<span class="t gt" id="g8" style="left:1396.0px;width:20px;text-align:center;top:22px">T</span>
<div class="abs" style="left:1479px;top:25px;width:1px;height:13px;background:#d0d0d0"></div>
<span class="t gt" id="g9" style="left:1445.0px;width:20px;text-align:center;top:22px">Q</span>
<div class="abs" style="left:1528px;top:25px;width:1px;height:13px;background:#d0d0d0"></div>
<span class="t gt" id="g10" style="left:1494.0px;width:20px;text-align:center;top:22px">Q</span>
<div class="abs" style="left:1577px;top:25px;width:1px;height:13px;background:#d0d0d0"></div>
<span class="t gt" id="g11" style="left:1543.0px;width:20px;text-align:center;top:22px">S</span>
<span class="t gt" id="gw1" style="left:991px;top:6px">8</span>
<span class="t gt" id="gw2" style="left:1289px;top:6px">15/Abr/18</span>
<div class="abs dot" style="left:1038px;top:39px;height:637px"></div>
<div class="abs dot" style="left:1087px;top:39px;height:637px"></div>
<div class="abs" style="left:990px;top:148px;width:593px;height:1px;background:#777"></div>
<div class="abs" style="left:990px;top:170px;width:593px;height:1px;background:#777"></div>
<div class="abs" style="left:1037px;top:44px;width:52px;height:2px;background:#aaaaaa;"></div>
<div class="abs" style="left:1037px;top:44px;width:3px;height:11px;background:#fff;border:1px solid #aaaaaa"></div>
<div class="abs" style="left:1086px;top:44px;width:3px;height:11px;background:#fff;border:1px solid #aaaaaa"></div>
<div class="abs" style="left:1037px;top:66px;width:23px;height:2px;background:#454545;"></div>
<div class="abs" style="left:1057px;top:66px;width:3px;height:11px;background:#454545;"></div>
<div class="abs" style="left:1037px;top:66px;width:3px;height:11px;background:#fff;border:1px solid #454545"></div>
<div class="abs" style="left:1057px;top:88px;width:5px;height:11px;background:#454545;"></div>
<div class="abs" style="left:1059px;top:110px;width:11px;height:2px;background:#454545;"></div>
<div class="abs" style="left:1059px;top:110px;width:3px;height:11px;background:#454545;"></div>
<div class="abs" style="left:1067px;top:110px;width:3px;height:11px;background:#454545;"></div>
<div class="abs" style="left:1067px;top:132px;width:5px;height:11px;background:#454545;"></div>
<div class="abs" style="left:1069px;top:154px;width:20px;height:2px;background:#454545;"></div>
<div class="abs" style="left:1069px;top:154px;width:3px;height:11px;background:#454545;"></div>
<div class="abs" style="left:1086px;top:154px;width:3px;height:11px;background:#fff;border:1px solid #454545"></div>
<div class="abs" style="left:1038px;top:46px;width:1px;height:1px;background:#666;"></div>
<div class="abs" style="left:1038px;top:50px;width:1px;height:1px;background:#666;"></div>
<div class="abs" style="left:1087px;top:46px;width:1px;height:1px;background:#666;"></div>
<div class="abs" style="left:1087px;top:50px;width:1px;height:1px;background:#666;"></div>
<div class="abs" style="left:1038px;top:70px;width:1px;height:1px;background:#666;"></div>
<div class="abs" style="left:1038px;top:74px;width:1px;height:1px;background:#666;"></div>
<div class="abs" style="left:1087px;top:158px;width:1px;height:1px;background:#666;"></div>
<div class="abs" style="left:1087px;top:162px;width:1px;height:1px;background:#666;"></div>
<div class="abs" style="left:1584px;top:16px;width:15px;height:646px;background:#f1f1f1"></div>
<div class="abs" style="left:1584px;top:2px;width:15px;height:14.500px;background:#fff;border:1px solid #ababab"></div>
<svg class="abs" style="left:1587.700px;top:7px" width="8" height="5" viewBox="0 0 8 5"><path d="M0 4h7.500L3.750 0z" fill="#111"/></svg>
<div class="abs" style="left:1584px;top:16.5px;width:15px;height:623.500px;background:#fff;border:1px solid #9a9a9a"></div>
<div class="abs" style="left:1584px;top:662px;width:15px;height:14.700px;background:#fff;border:1px solid #ababab"></div>
<svg class="abs" style="left:1587.700px;top:668px" width="8" height="5" viewBox="0 0 8 5"><path d="M0 0h7.500L3.750 4z" fill="#111"/></svg>
</div>
<div id="hs">
<div class="abs" style="left:18px;top:2px;width:923px;height:16px;background:#f3f3f3"></div>
<div class="abs" style="left:983px;top:2px;width:557px;height:16px;background:#f3f3f3"></div>
<div class="abs" style="left:2px;top:2.300px;width:14.700px;height:14.500px;background:#fff;border:1px solid #9a9a9a"></div>
<svg class="abs" style="left:6.7px;top:6px" width="5" height="8" viewBox="0 0 5 8"><path d="M4.200 0v7.200L0 3.600z" fill="#111"/></svg>
<div class="abs" style="left:16px;top:2px;width:695px;height:15px;background:#fff;border:1px solid #8c8c8c"></div>
<div class="abs" style="left:943px;top:2.300px;width:14.700px;height:14.500px;background:#fff;border:1px solid #9a9a9a"></div>
<svg class="abs" style="left:948.8px;top:6px" width="5" height="8" viewBox="0 0 5 8"><path d="M0 0v7.200L4.200 3.600z" fill="#111"/></svg>
<div class="abs" style="left:960px;top:0;width:1px;height:18px;background:#b4b4b4"></div>
<div class="abs" style="left:961px;top:0;width:3px;height:18px;background:#ececec"></div>
<div class="abs" style="left:964px;top:0;width:1px;height:18px;background:#b4b4b4"></div>
<div class="abs" style="left:967px;top:2.300px;width:14.700px;height:14.500px;background:#fff;border:1px solid #9a9a9a"></div>
<svg class="abs" style="left:971.7px;top:6px" width="5" height="8" viewBox="0 0 5 8"><path d="M4.200 0v7.200L0 3.600z" fill="#111"/></svg>
<div class="abs" style="left:1028px;top:2px;width:281px;height:15px;background:#fff;border:1px solid #8c8c8c"></div>
<div class="abs" style="left:1542.1px;top:2.300px;width:14.700px;height:14.500px;background:#fff;border:1px solid #9a9a9a"></div>
<svg class="abs" style="left:1547.8999999999999px;top:6px" width="5" height="8" viewBox="0 0 5 8"><path d="M0 0v7.200L4.200 3.600z" fill="#111"/></svg>
<div class="abs" style="left:1558px;top:0;width:17px;height:18px;background:#fff"></div>
</div>
<div id="st">
<span class="t" id="st1" style="left:12px;top:5px">Pronto</span>
<svg class="abs" style="left:79px;top:6px" width="17" height="12" viewBox="0 0 17 12"><rect x="0" y="0.3" width="13.6" height="6.2" rx="0.6" fill="#555"/><path d="M8.300 8.000h6.300M11.900 5.000l3.200 3-3.200 3" fill="none" stroke="#f3f3f3" stroke-width="3.400"/><path d="M8.600 8.000h6.300M11.900 5.000l3.200 3-3.200 3" fill="none" stroke="#555" stroke-width="1.700"/></svg>
<span class="t" id="st2" style="left:98px;top:5px">Novas Tarefas : Agendada Automaticamente</span>
<div class="abs" style="left:1263px;top:0;width:40px;height:21px;background:#c6c6c6"></div>
<svg class="abs" style="left:1270px;top:-1px" width="330" height="22" viewBox="1270 838 330 22" fill="none" stroke="#6e6e6e" stroke-width="1">
<rect x="1276.500" y="842.500" width="13" height="12" />
<path d="M1279 845h4.500M1281.500 848h5M1284 851.300h5.500" stroke-width="1.200"/>
<rect x="1316" y="842" width="14" height="13" fill="#6e6e6e" stroke="none"/>
<rect x="1317.200" y="846" width="2.300" height="7.800" fill="#f3f3f3" stroke="none"/>
<rect x="1321.0" y="846.0" width="1.800" height="1.800" fill="#f3f3f3" stroke="none"/>
<rect x="1324.0" y="846.0" width="1.800" height="1.800" fill="#f3f3f3" stroke="none"/>
<rect x="1327.0" y="846.0" width="1.800" height="1.800" fill="#f3f3f3" stroke="none"/>
<rect x="1321.0" y="848.9" width="1.800" height="1.800" fill="#f3f3f3" stroke="none"/>
<rect x="1324.0" y="848.9" width="1.800" height="1.800" fill="#f3f3f3" stroke="none"/>
<rect x="1327.0" y="848.9" width="1.800" height="1.800" fill="#f3f3f3" stroke="none"/>
<rect x="1321.0" y="851.8" width="1.800" height="1.800" fill="#f3f3f3" stroke="none"/>
<rect x="1324.0" y="851.8" width="1.800" height="1.800" fill="#f3f3f3" stroke="none"/>
<rect x="1327.0" y="851.8" width="1.800" height="1.800" fill="#f3f3f3" stroke="none"/>
<rect x="1356" y="842" width="14" height="13" fill="#6e6e6e" stroke="none"/>
<rect x="1357.200" y="843.200" width="7" height="2.600" fill="#f3f3f3" stroke="none"/>
<rect x="1364.200" y="847" width="4.600" height="2.800" fill="#f3f3f3" stroke="none"/>
<rect x="1357.200" y="851" width="2.600" height="2.800" fill="#f3f3f3" stroke="none"/>
<rect x="1361" y="851" width="7.800" height="2.800" fill="#f3f3f3" stroke="none"/>
<rect x="1395.750" y="842" width="13.500" height="13" fill="#6e6e6e" stroke="none"/>
<rect x="1397.0" y="843.2" width="2.900" height="2.800" fill="#f3f3f3" stroke="none"/>
<rect x="1401.1" y="843.2" width="2.900" height="2.800" fill="#f3f3f3" stroke="none"/>
<rect x="1405.2" y="843.2" width="2.900" height="2.800" fill="#f3f3f3" stroke="none"/>
<rect x="1397.0" y="847.1" width="2.900" height="2.800" fill="#f3f3f3" stroke="none"/>
<rect x="1401.1" y="847.1" width="2.900" height="2.800" fill="#f3f3f3" stroke="none"/>
<rect x="1405.2" y="847.1" width="2.900" height="2.800" fill="#f3f3f3" stroke="none"/>
<rect x="1397.0" y="851.0" width="2.900" height="2.800" fill="#f3f3f3" stroke="none"/>
<rect x="1401.1" y="851.0" width="2.900" height="2.800" fill="#f3f3f3" stroke="none"/>
<rect x="1405.2" y="851.0" width="2.900" height="2.800" fill="#f3f3f3" stroke="none"/>
<rect x="1438.500" y="842.500" width="10.500" height="12" />
<path d="M1436 846h4M1436 851h4" stroke-width="1.600"/>
<g fill="#444" stroke="none"><rect x="1468.800" y="848.100" width="7.800" height="1.300"/><rect x="1482" y="848.900" width="100" height="1.100"/><rect x="1532" y="847" width="1.100" height="5"/><rect x="1587" y="848.100" width="7.700" height="1.300"/><rect x="1590.200" y="844.700" width="1.300" height="8.300"/></g>
<rect x="1556" y="844" width="5" height="10.800" fill="#444" stroke="none"/>
</svg>
</div>
<div id="blk1"></div><div id="blk2"></div><div class="abs" style="left:933px;top:861px;width:48px;height:1px;background:#333"></div>
</body>
</html>
